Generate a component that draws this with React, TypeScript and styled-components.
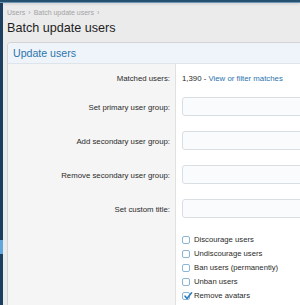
import React from "react";
import styled, { createGlobalStyle } from "styled-components";

const Global = createGlobalStyle`
  html, body { margin: 0; padding: 0; }
  body {
    background: #ebebeb;
    font-family: "Liberation Sans", Arial, sans-serif;
    width: 300px;
    height: 305px;
    overflow: hidden;
  }
`;

const Page = styled.div`
  display: flex;
  flex-direction: column;
  height: 305px;
  overflow: hidden;
`;

const TopBar = styled.div`
  height: 3px;
  flex: none;
  background: linear-gradient(to bottom, #25506f 0 2px, #6f97b4 2px 3px);
  box-shadow: 0 1px 3px rgba(0, 0, 0, 0.12);
`;

const Body = styled.div`
  display: flex;
  flex: 1;
  min-height: 0;
`;

const SideStrip = styled.div`
  width: 3px;
  flex: none;
  background: linear-gradient(
    to bottom,
    #1d3f5f 0 237px,
    #62a6de 237px 251px,
    #1d3f5f 251px
  );
`;

const Main = styled.div`
  flex: 1;
  padding: 5px 0 0 4px;
  min-width: 0;
`;

const Crumbs = styled.div`
  font-size: 7px;
  color: #a3a3a3;
  height: 9px;
  line-height: 9px;
  display: flex;
  gap: 3px;
`;

const Title = styled.h1`
  margin: 3px 0 0 0;
  font-size: 12.6px;
  font-weight: normal;
  color: #1e1e1e;
  line-height: 16px;
  height: 16px;
`;

const Panel = styled.div`
  margin-top: 6px;
  border: 1px solid #d3d3d3;
  border-right: none;
  border-top-left-radius: 4px;
  background: #ffffff;
  overflow: hidden;
`;

const PanelHeader = styled.div`
  height: 20px;
  line-height: 20px;
  padding-left: 5px;
  background: #eef4f9;
  border-bottom: 1px solid #dde4ea;
  color: #2d74ad;
  font-size: 10.6px;
`;

const Row = styled.div<{ $h: number }>`
  display: flex;
  height: ${(p) => p.$h}px;
`;

const Label = styled.div`
  width: 168px;
  flex: none;
  box-sizing: border-box;
  padding-right: 5px;
  background: #f5f5f5;
  border-right: 1px solid #e1e1e1;
  display: flex;
  justify-content: flex-end;
  align-items: center;
  font-size: 7.8px;
  color: #2a2a2a;
`;

const Value = styled.div<{ $pt?: number }>`
  flex: 1;
  display: flex;
  flex-direction: column;
  justify-content: ${(p) => (p.$pt !== undefined ? "flex-start" : "center")};
  padding: ${(p) => p.$pt ?? 0}px 0 0 6px;
  font-size: 7.8px;
  color: #2a2a2a;
  min-width: 0;
`;

const Link = styled.a`
  color: #2d74ad;
  text-decoration: none;
`;

const Input = styled.div`
  height: 19px;
  box-sizing: border-box;
  margin-right: -10px;
  border: 1px solid #d9dee3;
  border-radius: 3px;
  background: #f9fbfc;
`;

const InputRow = styled(Row)`
  & > ${Label} {
    align-items: flex-start;
    padding-top: 11px;
  }
`;

const CheckList = styled.div`
  display: flex;
  flex-direction: column;
  gap: 5px;
  padding-top: 7px;
`;

const CheckItem = styled.label`
  display: flex;
  align-items: center;
  gap: 4px;
  height: 9px;
  font-size: 7.7px;
  color: #2a2a2a;
`;

const Box = styled.span`
  width: 8px;
  height: 8px;
  box-sizing: border-box;
  border: 1px solid #8cb6d4;
  border-radius: 2px;
  background: #ffffff;
  position: relative;
  flex: none;
`;

const Tick = styled.svg`
  position: absolute;
  left: -0.5px;
  top: -1.5px;
`;

const checks: { label: string; checked?: boolean }[] = [
  { label: "Discourage users" },
  { label: "Undiscourage users" },
  { label: "Ban users (permanently)" },
  { label: "Unban users" },
  { label: "Remove avatars", checked: true },
];

const inputs = [
  "Set primary user group:",
  "Add secondary user group:",
  "Remove secondary user group:",
  "Set custom title:",
];

export default function App() {
  return (
    <>
      <Global />
      <Page>
        <TopBar />
        <Body>
          <SideStrip />
          <Main>
            <Crumbs>
              <span>Users</span>
              <span>›</span>
              <span>Batch update users</span>
              <span>›</span>
            </Crumbs>
            <Title>Batch update users</Title>
            <Panel>
              <PanelHeader>Update users</PanelHeader>
              <Row $h={28}>
                <Label>Matched users:</Label>
                <Value>
                  <span>
                    1,390 - <Link>View or filter matches</Link>
                  </span>
                </Value>
              </Row>
              {inputs.map((t) => (
                <InputRow $h={34} key={t}>
                  <Label>{t}</Label>
                  <Value $pt={5}>
                    <Input />
                  </Value>
                </InputRow>
              ))}
              <Row $h={80}>
                <Label />
                <Value $pt={0}>
                  <CheckList>
                    {checks.map((c) => (
                      <CheckItem key={c.label}>
                        <Box>
                          {c.checked && (
                            <Tick width="10" height="10" viewBox="0 0 10 10">
                              <path
                                d="M2 5.2 L4 7.4 L8.6 1.8"
                                fill="none"
                                stroke="#2f7fc0"
                                strokeWidth="1.6"
                                strokeLinecap="round"
                                strokeLinejoin="round"
                              />
                            </Tick>
                          )}
                        </Box>
                        <span>{c.label}</span>
                      </CheckItem>
                    ))}
                  </CheckList>
                </Value>
              </Row>
            </Panel>
          </Main>
        </Body>
      </Page>
    </>
  );
}
